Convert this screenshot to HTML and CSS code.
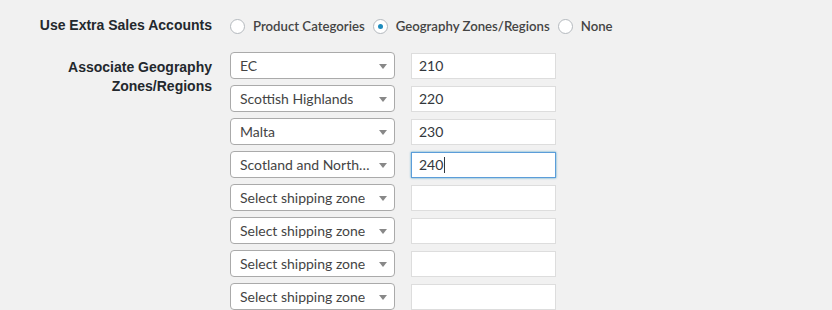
FILE: index.html
```html
<!DOCTYPE html>
<html lang="en">
<head>
  <meta charset="UTF-8" />
  <title>Extra Sales Accounts</title>
  <link rel="stylesheet" href="styles.css">
</head>
<body>
  <div class="form">
    <div class="field">
      <div class="label">Use Extra Sales Accounts</div>
      <div class="radios">
        <label class="radio"><span class="dot"></span>Product Categories</label>
        <label class="radio"><span class="dot checked"></span>Geography Zones/Regions</label>
        <label class="radio"><span class="dot"></span>None</label>
      </div>
    </div>
    <div class="field zones">
      <div class="label">Associate Geography Zones/Regions</div>
      <div class="rows">
        <div class="row">
          <div class="select"><span>EC</span><i class="arrow"></i></div>
          <input class="account" type="text" value="210">
        </div>
        <div class="row">
          <div class="select"><span>Scottish Highlands</span><i class="arrow"></i></div>
          <input class="account" type="text" value="220">
        </div>
        <div class="row">
          <div class="select"><span>Malta</span><i class="arrow"></i></div>
          <input class="account" type="text" value="230">
        </div>
        <div class="row">
          <div class="select"><span>Scotland and Northern Ireland</span><i class="arrow"></i></div>
          <div class="account focus">240<span class="caret"></span></div>
        </div>
        <div class="row">
          <div class="select"><span>Select shipping zone</span><i class="arrow"></i></div>
          <input class="account" type="text">
        </div>
        <div class="row">
          <div class="select"><span>Select shipping zone</span><i class="arrow"></i></div>
          <input class="account" type="text">
        </div>
        <div class="row">
          <div class="select"><span>Select shipping zone</span><i class="arrow"></i></div>
          <input class="account" type="text">
        </div>
        <div class="row">
          <div class="select"><span>Select shipping zone</span><i class="arrow"></i></div>
          <input class="account" type="text">
        </div>
      </div>
    </div>
  </div>
</body>
</html>
```

FILE: styles.css
```css
* {
  margin: 0;
  padding: 0;
  box-sizing: border-box;
}
body {
  background-color: #f1f1f1;
  color: #444;
  font-family: 'Lato', sans-serif;
  font-size: 14px;
}
.form {
  padding-top: 16px;
}
.field {
  display: flex;
  gap: 18px;
}
.label {
  width: 212px;
  text-align: right;
  font-family: 'Liberation Sans', Arial, sans-serif;
  font-weight: bold;
  font-size: 14px;
  color: #23282d;
  line-height: 19px;
}
.radios {
  display: flex;
  align-items: center;
  gap: 8px;
  height: 20px;
}
.radio {
  display: flex;
  align-items: center;
  gap: 8px;
  font-size: 13.2px;
  font-weight: 600;
  color: #444;
}
.dot {
  width: 15px;
  height: 15px;
  border: 1px solid #b4b9be;
  border-radius: 50%;
  background: #fff;
  display: flex;
  align-items: center;
  justify-content: center;
}
.dot.checked::after {
  content: "";
  width: 5px;
  height: 5px;
  border-radius: 50%;
  background: #1e8cbe;
}
.zones {
  margin-top: 16px;
}
.zones .label {
  padding-top: 6px;
}
.rows {
  display: flex;
  flex-direction: column;
  gap: 6px;
}
.row {
  display: flex;
  align-items: center;
  gap: 16px;
  height: 27px;
}
.select {
  position: relative;
  width: 165px;
  height: 27px;
  border: 1px solid #aaa;
  border-radius: 4px;
  background: #fff;
  padding: 0 21px 0 9px;
  display: flex;
  align-items: center;
}
.select span {
  white-space: nowrap;
  overflow: hidden;
  text-overflow: ellipsis;
}
.arrow {
  position: absolute;
  right: 7px;
  top: 11px;
  border-left: 4px solid transparent;
  border-right: 4px solid transparent;
  border-top: 5px solid #888;
}
.account {
  width: 145px;
  height: 26px;
  border: 1px solid #ddd;
  background: #fff;
  padding: 0 7px;
  font-family: 'Lato', sans-serif;
  font-size: 14px;
  color: #32373c;
  outline: none;
  display: flex;
  align-items: center;
}
.account.focus {
  border-color: #5b9dd9;
  box-shadow: 0 0 2px rgba(30, 140, 190, 0.8);
}
.caret {
  width: 1px;
  height: 16px;
  background: #32373c;
  margin-left: 1px;
}
```
